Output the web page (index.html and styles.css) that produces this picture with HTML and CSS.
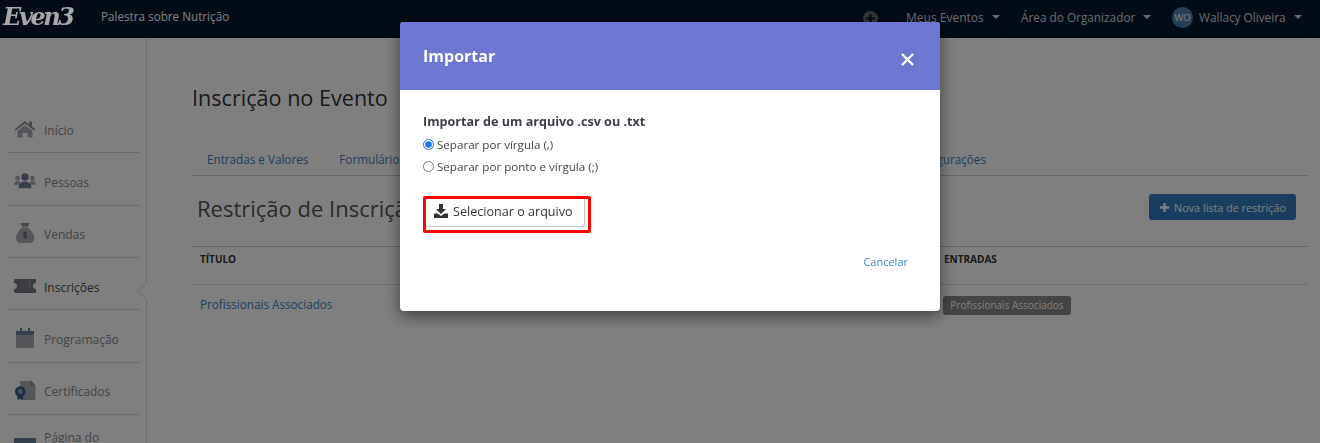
FILE: index.html
```html
<!DOCTYPE html>
<html lang="pt-BR">
<head>
<meta charset="utf-8">
<title>Importar</title>
<link rel="stylesheet" href="styles.css">
</head>
<body>
<header class="navbar">
  <div class="brand">Even3</div>
  <div class="event-name">Palestra sobre Nutrição</div>
  <div class="nav-right">
    <div class="nav-add">
      <svg width="15" height="15" viewBox="0 0 16 16"><circle cx="8" cy="8" r="8" fill="#6a6a6a"/><path d="M8 3.5v9M3.5 8h9" stroke="#04182c" stroke-width="2.6"/></svg>
    </div>
    <div class="nav-item nav-events">Meus Eventos <span class="caret"></span></div>
    <div class="nav-item nav-org">Área do Organizador <span class="caret"></span></div>
    <div class="nav-item nav-user"><span class="avatar">WO</span>Wallacy Oliveira <span class="caret"></span></div>
  </div>
</header>
<div class="layout">
  <aside class="sidebar">
    <div class="side-item">
      <svg class="side-icon" viewBox="0 0 22 18"><path d="M0.5 9.5 11 1l4 3.2V1.600h3v5l3.500 2.900-1.200 1.300L11 3.600 1.700 10.800z" fill="#8d9299"/><path d="M3.500 11 11 5.300 18.500 11v6.500h-5v-4.500h-5v4.500h-5z" fill="#a8acb2"/></svg>
      <span class="side-text">Início</span>
    </div>
    <div class="side-item">
      <svg class="side-icon" viewBox="0 0 24 18"><circle cx="4" cy="6" r="2.600" fill="#a8acb2"/><circle cx="20" cy="6" r="2.600" fill="#a8acb2"/><path d="M0 13c0-3 2-4 4-4s3 .6 3 2v2zM24 13c0-3-2-4-4-4s-3 .6-3 2v2z" fill="#a8acb2"/><circle cx="12" cy="4.500" r="4" fill="#6b7c96"/><path d="M5 17c0-5 3-7.500 7-7.500s7 2.500 7 7.500z" fill="#6b7c96"/></svg>
      <span class="side-text">Pessoas</span>
    </div>
    <div class="side-item">
      <svg class="side-icon" viewBox="0 0 22 22"><path d="M6 0h10l-2 4H8z" fill="#8d9299"/><path d="M8 5h6c4 3 7 8 7 12 0 3-2 5-5 5H6c-3 0-5-2-5-5 0-4 3-9 7-12z" fill="#a8acb2"/><text x="11" y="17" class="side-money">$</text></svg>
      <span class="side-text">Vendas</span>
    </div>
    <div class="side-item side-active">
      <svg class="side-icon" viewBox="0 0 22 14"><path d="M0 1a1 1 0 0 1 1-1h20a1 1 0 0 1 1 1v3a3 3 0 0 0 0 6v3a1 1 0 0 1-1 1H1a1 1 0 0 1-1-1v-3a3 3 0 0 0 0-6z" fill="#77797e"/><path d="M15.500 1v12" stroke="#a8acb2" stroke-dasharray="1.500 1.500"/></svg>
      <span class="side-text">Inscrições</span>
    </div>
    <div class="side-item">
      <svg class="side-icon side-icon-cal" viewBox="0 0 18 20"><rect y="5" width="18" height="15" rx="1" fill="#a8acb2"/><path d="M0 3h18v4H0z" fill="#6b7c96"/><path d="M4 0h2v4H4zM12 0h2v4h-2z" fill="#6b7c96"/></svg>
      <span class="side-text">Programação</span>
    </div>
    <div class="side-item">
      <svg class="side-icon" viewBox="0 0 22 21"><path d="M6 1h11l5 5v14a1 1 0 0 1-1 1H6z" fill="#a8acb2"/><path d="M17 0v6h5z" fill="#8d9299"/><circle cx="6" cy="12" r="5.500" fill="#2f5d8a"/><circle cx="6" cy="12" r="2.500" fill="#a8acb2"/><path d="M3 16.500V21l3-1.500L9 21v-4.500z" fill="#2f5d8a"/></svg>
      <span class="side-text">Certificados</span>
    </div>
    <div class="side-item side-last">
      <svg class="side-icon" viewBox="0 0 22 18"><rect width="22" height="18" rx="1" fill="#6b7c96"/><rect x="2" y="5" width="18" height="11" fill="#a8acb2"/></svg>
      <span class="side-text">Página do</span>
    </div>
    <span class="side-arrow"></span>
  </aside>
  <main class="content">
    <h1 class="page-title">Inscrição no Evento</h1>
    <nav class="tabs">
      <span>Entradas e Valores</span>
      <span>Formulário</span>
      <span class="tab-last">Configurações</span>
    </nav>
    <div class="section-head">
      <h2 class="section-title">Restrição de Inscrição</h2>
      <button class="btn-primary" type="button">
        <svg width="11" height="11" viewBox="0 0 12 12"><path d="M6 1v10M1 6h10" stroke="#fff" stroke-width="2.600"/></svg>
        Nova lista de restrição
      </button>
    </div>
    <div class="table">
      <div class="t-row t-head"><span class="t-title">TÍTULO</span><span class="t-tickets">ENTRADAS</span></div>
      <div class="t-row t-body"><span class="t-title t-link">Profissionais Associados</span><span class="t-tickets"><span class="tag">Profissionais Associados</span></span></div>
    </div>
  </main>
</div>
<div class="backdrop"></div>
<section class="modal">
  <div class="modal-head">
    <h3>Importar</h3>
    <svg class="modal-close" width="13" height="13" viewBox="0 0 13 13"><path d="M1 1l11 11M12 1 1 12" stroke="#fff" stroke-width="2.400"/></svg>
  </div>
  <div class="modal-body">
    <p class="import-label">Importar de um arquivo .csv ou .txt</p>
    <label class="radio"><input type="radio" name="sep" checked>Separar por vírgula (,)</label>
    <label class="radio"><input type="radio" name="sep">Separar por ponto e vírgula (;)</label>
    <div class="highlight">
      <button class="btn-file" type="button">
        <svg width="14" height="14" viewBox="0 0 14 14"><path d="M5 0h4v5h3L7 10 2 5h3z" fill="#333"/><path d="M0 9.500h3.500L7 12l3.500-2.500H14V14H0z" fill="#333"/></svg>
        Selecionar o arquivo
      </button>
    </div>
    <div class="modal-foot"><a class="cancel">Cancelar</a></div>
  </div>
</section>
</body>
</html>
```
FILE: styles.css
```css
* { box-sizing: border-box; }
html, body { margin: 0; height: 443px; overflow: hidden; }
body { background: #fff; font-family: "Open Sans", sans-serif; font-size: 12px; color: #333; }

.navbar { height: 38px; background: #04182c; display: flex; align-items: stretch; color: #fff; }
.brand { position: relative; z-index: 2; width: 87px; padding-left: 3px; border-right: 1px solid #020b14; font-family: "DejaVu Serif", serif; font-style: italic; font-weight: 700; font-size: 24px; line-height: 33px; letter-spacing: -2.400px; color: #a8a8a8; }
.event-name { padding-left: 14px; line-height: 32px; font-size: 11.700px; }
.nav-right { margin-left: auto; display: flex; align-items: stretch; padding-right: 12px; }
.nav-add { width: 38px; display: flex; align-items: center; padding-left: 9px; padding-bottom: 1px; border-right: 1px solid #031120; }
.nav-item { display: flex; align-items: center; gap: 5px; border-right: 1px solid #031120; font-size: 12px; color: #d6d6d6; padding-bottom: 4px; white-space: pre; }
.nav-events { width: 115px; padding-left: 14px; }
.nav-org { width: 154px; padding-left: 14px; font-size: 11.800px; }
.nav-user { width: 147px; padding-left: 11px; font-size: 11.800px; }
.avatar { width: 21px; height: 21px; margin-right: 1px; border-radius: 50%; background: #4f7fa8; color: #fff; font-size: 9.500px; display: flex; align-items: center; justify-content: center; }
.caret { width: 0; height: 0; border-left: 4px solid transparent; border-right: 4px solid transparent; border-top: 4px solid #d6d6d6; }

.layout { display: flex; height: 405px; }
.sidebar { position: relative; width: 147px; flex: none; border-right: 1px solid #d5dcdc; padding: 63px 6px 0 8px; }
.side-item { height: 52.350px; flex: none; border-bottom: 1px solid #d8d8d8; display: flex; align-items: center; gap: 8px; padding: 6px 0 0 6px; color: #888; font-size: 12px; line-height: 16px; }
.side-text { margin-top: 2px; }
.side-active { color: #4a4a4a; }
.side-last { padding-top: 0; }
.side-last .side-text { margin-top: -6px; }
.side-last .side-icon { margin-top: 14px; }
.side-icon { width: 22px; height: 20px; flex: none; margin-bottom: 2px; }
.side-icon-cal { padding: 0 2px; }
.side-money { font-family: "Open Sans", sans-serif; font-size: 9px; text-anchor: middle; fill: #2f4a6a; }
.side-arrow { position: absolute; left: 140px; top: 246px; width: 14px; height: 14px; background: #fff; border-left: 1px solid #d5dcdc; border-bottom: 1px solid #d5dcdc; transform: rotate(45deg); clip-path: polygon(0 0, 0 100%, 100% 100%); }

.content { flex: 1; padding: 0 12px 0 45px; min-width: 0; }
.page-title { margin: 46px 0 0; font-size: 21.600px; font-weight: 400; line-height: 28px; color: #333; }
.tabs { margin-top: 39px; height: 25px; border-bottom: 1px solid #ccc; display: flex; gap: 31px; padding: 0 322px 0 15px; color: #3d80c0; font-size: 11.700px; line-height: 17px; }
.tab-last { margin-left: auto; }
.section-head { display: flex; justify-content: space-between; align-items: flex-start; height: 70px; padding: 16px 12px 0 5px; }
.section-title { margin: 0; font-size: 22px; font-weight: 400; line-height: 33px; color: #555; }
.btn-primary { height: 26px; width: 147px; margin-top: 2px; border: 0; border-radius: 3px; background: #347abe; color: #fff; font: inherit; font-size: 10.800px; display: flex; align-items: center; justify-content: center; gap: 4px; padding: 0; }
.t-row { display: flex; border-top: 1px solid #ccc; padding-left: 8px; }
.t-title { width: 744px; flex: none; }
.t-head { height: 38px; padding-top: 4px; font-weight: 700; font-size: 10px; line-height: 16px; color: #333; }
.t-body { height: 40px; border-top-color: #ddd; padding-top: 11px; font-size: 11.700px; line-height: 17px; }
.t-link { color: #3d80c0; }
.tag { display: inline-block; height: 19px; width: 128px; margin-left: -1px; border-radius: 3px; background: #888; color: #fff; font-size: 10px; line-height: 19px; text-align: center; white-space: nowrap; }

.backdrop { position: fixed; inset: 0; z-index: 1; background: rgba(0, 0, 0, .5); }
.modal { position: fixed; z-index: 3; left: 400px; top: 22px; width: 540px; height: 289px; background: #fff; border-radius: 4px; overflow: hidden; box-shadow: 0 5px 15px rgba(0, 0, 0, .5); }
.modal-head { height: 68px; background: #6b77d1; display: flex; align-items: center; justify-content: space-between; padding: 0 26px 0 23px; color: #fff; }
.modal-head h3 { margin: 0; font-size: 16px; font-weight: 700; }
.modal-close { margin-top: 7px; }
.modal-body { padding: 23px 32px 0 23px; }
.import-label { margin: 0 0 2px; font-size: 12.600px; font-weight: 700; line-height: 18px; color: #3a3f47; }
.radio { display: flex; align-items: center; height: 22px; font-size: 11.600px; color: #444; }
.radio input { width: 11px; height: 11px; margin: 0 3px 0 0; accent-color: #1a73e8; }
.highlight { margin-top: 19px; width: 168px; height: 37px; border: 3px solid #f00; border-radius: 2px; padding-right: 3px; overflow: hidden; }
.btn-file { display: flex; align-items: center; gap: 5px; width: 100%; height: 28px; border: 1px solid #ccc; border-top: 0; border-left: 0; border-radius: 0 0 3px 0; background: #fff; padding: 0 0 3px 8px; font: inherit; font-size: 12.600px; color: #333; }
.modal-foot { display: flex; justify-content: flex-end; margin-top: 21px; font-size: 11px; line-height: 16px; }
.cancel { color: #3d85c6; }
```
